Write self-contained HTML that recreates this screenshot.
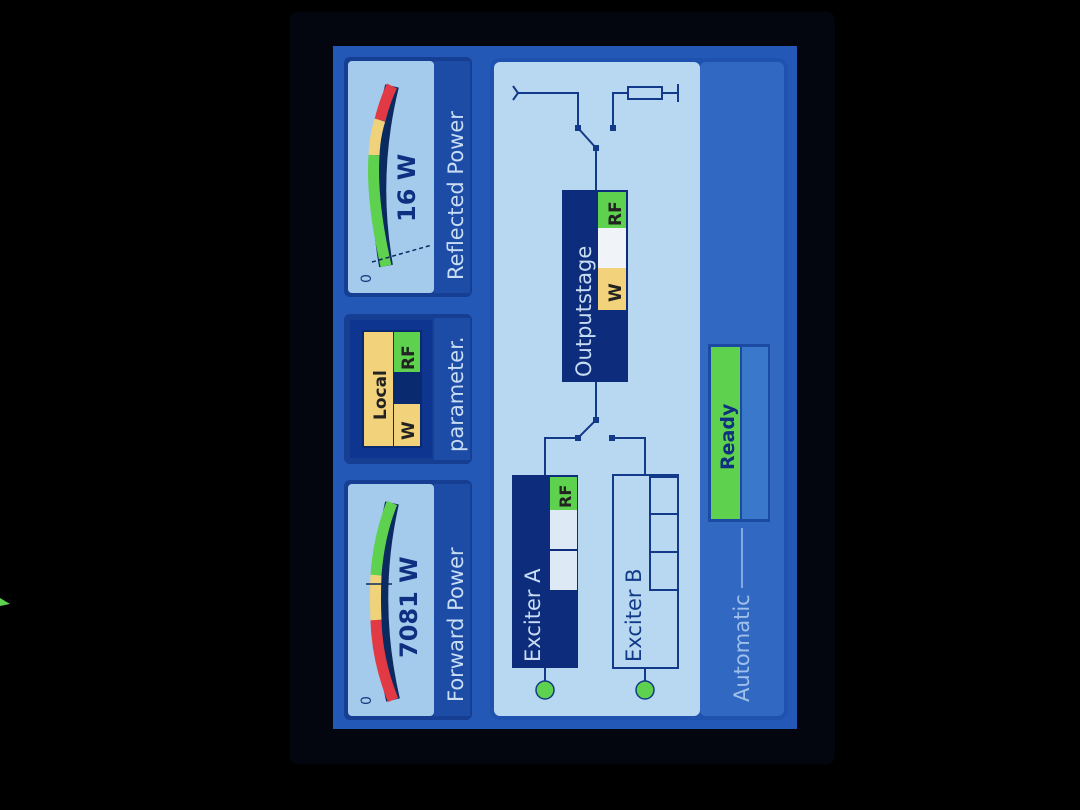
<!DOCTYPE html>
<html><head><style>
html,body{margin:0;padding:0;background:#000;}
svg{display:block}
text{font-family:"DejaVu Sans","Liberation Sans",sans-serif}
</style></head><body>
<svg width="1080" height="810" viewBox="0 0 1080 810" xmlns="http://www.w3.org/2000/svg">
<rect width="1080" height="810" fill="#000"/>
<rect x="290" y="12" width="545" height="752" rx="8" fill="#03060f"/>
<rect x="333" y="46" width="464" height="683" fill="#2458b6"/>
<rect x="344" y="57" width="128" height="240" rx="6" fill="#163e92"/>
<rect x="348" y="61" width="86" height="232" rx="4" fill="#a4cbec"/>
<rect x="434" y="61" width="36" height="232" fill="#1c4ca6"/>
<text transform="translate(463,280) rotate(-90)" font-size="21" fill="#c8dcf4">Reflected Power</text>
<path d="M386,266 Q370,175 392,86" fill="none" stroke="#0b2a60" stroke-width="14"/>
<path d="M386,266 Q371,200 374,155" fill="none" stroke="#5ed14e" stroke-width="11"/>
<path d="M374,155 Q375,135 380,120" fill="none" stroke="#f0d27a" stroke-width="11"/>
<path d="M380,120 Q385,100 392,86" fill="none" stroke="#e23a45" stroke-width="11"/>
<path d="M372,262 L432,245" stroke="#0b2a60" stroke-width="1.5" stroke-dasharray="4,3"/>
<text transform="translate(371,283) rotate(-90)" font-size="14" fill="#1a3a80">0</text>
<text transform="translate(415,222) rotate(-90)" font-size="24" font-weight="bold" fill="#0f2f80">16 W</text>
<rect x="344" y="314" width="128" height="150" rx="6" fill="#163e92"/>
<rect x="350" y="320" width="82" height="138" fill="#0e3590"/>
<rect x="434" y="318" width="36" height="142" fill="#1c4ca6"/>
<text transform="translate(463,452) rotate(-90)" font-size="21" fill="#c8dcf4">parameter.</text>
<rect x="362" y="330" width="60" height="118" fill="#0a2a70"/>
<rect x="364" y="332" width="29" height="114" fill="#f2d27a"/>
<rect x="394" y="332" width="26" height="40" fill="#5ed14e"/>
<rect x="394" y="404" width="26" height="42" fill="#f2d27a"/>
<text transform="translate(386,420) rotate(-90)" font-size="17" font-weight="bold" fill="#222">Local</text>
<text transform="translate(414,370) rotate(-90)" font-size="17" font-weight="bold" fill="#222">RF</text>
<text transform="translate(414,440) rotate(-90)" font-size="17" font-weight="bold" fill="#222">W</text>
<rect x="344" y="480" width="128" height="240" rx="6" fill="#163e92"/>
<rect x="348" y="484" width="86" height="232" rx="4" fill="#a4cbec"/>
<rect x="434" y="484" width="36" height="232" fill="#1c4ca6"/>
<text transform="translate(463,702) rotate(-90)" font-size="21" fill="#c8dcf4">Forward Power</text>
<path d="M393,700 Q370,600 392,503" fill="none" stroke="#0b2a60" stroke-width="14"/>
<path d="M393,700 Q377,660 376,620" fill="none" stroke="#e23a45" stroke-width="11"/>
<path d="M376,620 Q375,598 376,575" fill="none" stroke="#f0d27a" stroke-width="11"/>
<path d="M376,575 Q379,535 392,503" fill="none" stroke="#5ed14e" stroke-width="11"/>
<path d="M366,584 L392,584" stroke="#0b2a60" stroke-width="1.5"/>
<text transform="translate(371,705) rotate(-90)" font-size="14" fill="#1a3a80">0</text>
<text transform="translate(417,658) rotate(-90)" font-size="24" font-weight="bold" fill="#0f2f80">7081 W</text>
<rect x="490" y="58" width="298" height="662" rx="10" fill="#1e52ae"/>
<rect x="494" y="62" width="206" height="654" rx="6" fill="#b8d8f2"/>
<rect x="700" y="62" width="84" height="654" rx="6" fill="#3068c2"/>
<g stroke="#123a88" stroke-width="2" fill="none">
<path d="M513,86 L518,93 L513,100 M518,93 L578,93 L578,128"/>
<path d="M578,128 L596,148 L596,190"/>
<path d="M613,128 L613,93 L628,93"/>
<rect x="628" y="87" width="34" height="12"/>
<path d="M662,93 L678,93 M678,84 L678,102"/>
<path d="M596,382 L596,420 L578,438 L545,438 L545,475"/>
<path d="M612,438 L645,438 L645,475"/>
<path d="M545,668 L545,682 M645,668 L645,682"/>
</g>
<g fill="#123a88">
<rect x="575" y="125" width="6" height="6"/><rect x="610" y="125" width="6" height="6"/><rect x="593" y="145" width="6" height="6"/>
<rect x="593" y="417" width="6" height="6"/><rect x="575" y="435" width="6" height="6"/><rect x="609" y="435" width="6" height="6"/>
</g>
<rect x="562" y="190" width="66" height="192" fill="#0d2d7c"/>
<rect x="598" y="192" width="28" height="36" fill="#5ed14e"/>
<rect x="598" y="228" width="28" height="40" fill="#f0f4f8"/>
<rect x="598" y="268" width="28" height="42" fill="#f2d27a"/>
<text transform="translate(591,377) rotate(-90)" font-size="21" fill="#c8dcf4">Outputstage</text>
<text transform="translate(621,226) rotate(-90)" font-size="17" font-weight="bold" fill="#222">RF</text>
<text transform="translate(621,302) rotate(-90)" font-size="17" font-weight="bold" fill="#222">W</text>
<rect x="512" y="475" width="66" height="193" fill="#0d2d7c"/>
<rect x="550" y="477" width="27" height="33" fill="#5ed14e"/>
<rect x="550" y="510" width="27" height="80" fill="#dde9f4"/>
<line x1="550" y1="550" x2="577" y2="550" stroke="#0d2d7c" stroke-width="2"/>
<text transform="translate(571,508) rotate(-90)" font-size="16" font-weight="bold" fill="#222">RF</text>
<text transform="translate(540,662) rotate(-90)" font-size="21" fill="#c8dcf4">Exciter A</text>
<g stroke="#123a88" stroke-width="2" fill="none">
<rect x="613" y="475" width="65" height="193"/>
<rect x="650" y="477" width="28" height="113"/>
<line x1="650" y1="514" x2="678" y2="514"/><line x1="650" y1="552" x2="678" y2="552"/>
</g>
<text transform="translate(641,662) rotate(-90)" font-size="21" fill="#123a88">Exciter B</text>
<circle cx="545" cy="690" r="9" fill="#5ed14e" stroke="#123a88" stroke-width="1.5"/>
<circle cx="645" cy="690" r="9" fill="#5ed14e" stroke="#123a88" stroke-width="1.5"/>
<rect x="708" y="344" width="62" height="178" fill="#1a4aa2"/>
<rect x="711" y="347" width="29" height="172" fill="#5ed14e"/>
<rect x="742" y="347" width="26" height="172" fill="#3a78cc"/>
<text transform="translate(734,470) rotate(-90)" font-size="19" font-weight="bold" fill="#0f2f80">Ready</text>
<text transform="translate(749,702) rotate(-90)" font-size="21" fill="#9fc0ea">Automatic</text>
<line x1="742" y1="528" x2="742" y2="588" stroke="#9fc0ea" stroke-width="1.5"/>
<path d="M0,598 L10,604 L0,606 Z" fill="#5ed14e"/>
</svg>
</body></html>
